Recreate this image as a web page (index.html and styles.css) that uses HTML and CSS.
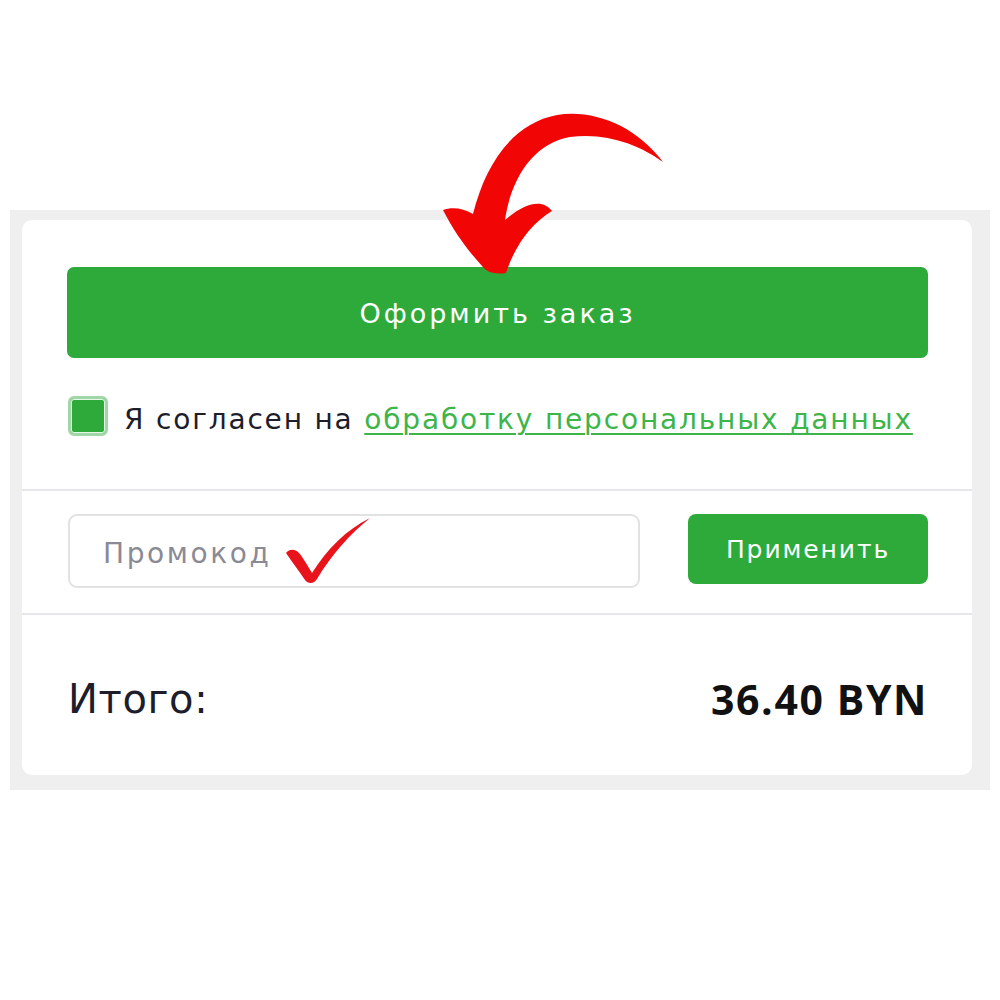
FILE: index.html
```html
<!DOCTYPE html>
<html lang="ru">
<head>
<meta charset="utf-8">
<title>Оформление заказа</title>
<link rel="stylesheet" href="styles.css">
</head>
<body>
<div class="frame">
  <div class="card">
    <section class="order">
      <button class="btn-order" type="button">Оформить заказ</button>
      <label class="agree">
        <span class="check"></span>
        <span class="agree-text">Я согласен на <a href="#" class="link">обработку персональных данных</a></span>
      </label>
    </section>
    <section class="promo">
      <div class="promo-input">Промокод</div>
      <button class="btn-apply" type="button">Применить</button>
    </section>
    <section class="total">
      <span class="total-label">Итого:</span>
      <span class="total-sum">36.40 BYN</span>
    </section>
  </div>
</div>
<svg class="marks" width="1000" height="1000" viewBox="0 0 1000 1000" aria-hidden="true">
  <path fill="#f20505" d="M663 162 C 636 126, 594 109, 557 115 C 514 123, 486 162, 473 214 C 463 208, 452 207, 443 210 C 456 236, 474 258, 486 270 C 492 274, 500 274, 506 273 C 514 248, 530 224, 552 211 C 544 200, 528 200, 505 220 C 511 178, 534 143, 570 137 C 606 132, 640 145, 663 162 Z"/>
  <path fill="#e8131b" d="M286 553 C 290 548, 296 549, 300 554 C 305 561, 309 568, 312 573 C 328 548, 346 530, 370 518 C 350 534, 332 554, 317 579 C 314 584, 308 584, 305 580 C 299 571, 292 562, 286 553 Z"/>
</svg>
</body>
</html>
```
FILE: styles.css
```css
* { box-sizing: border-box; }
html, body { margin: 0; padding: 0; background: #ffffff; }
body { position: relative; width: 1000px; height: 1000px; font-family: "DejaVu Sans", sans-serif; }

.frame {
  margin: 210px 0 0 10px;
  width: 980px;
  height: 580px;
  background: #efefef;
  padding: 10px 18px 15px 12px;
}
.card {
  height: 100%;
  background: #ffffff;
  border-radius: 10px;
  display: flex;
  flex-direction: column;
}

.order {
  padding: 47px 44px 0 45px;
  height: 271px;
  border-bottom: 2px solid #e6e7ec;
}
.btn-order {
  display: block;
  width: 100%;
  height: 91px;
  border: none;
  border-radius: 7px;
  background: #2eaa3b;
  color: #ffffff;
  font-family: "DejaVu Sans", sans-serif;
  font-size: 27px;
  letter-spacing: 3px;
  padding: 2px 0 0;
}
.agree {
  display: flex;
  align-items: center;
  gap: 16px;
  margin-top: 37px;
  padding-left: 1px;
}
.check {
  width: 40px;
  height: 40px;
  border-radius: 6px;
  background: #2eaa3b;
  border: 3px solid #9fd8a6;
  box-shadow: inset 0 0 0 1px #e8f6ea;
  flex: none;
}
.agree-text {
  font-size: 28px;
  letter-spacing: 1.82px;
  color: #1d1d2b;
  white-space: nowrap;
  margin-top: 8px;
}
.link {
  color: #3db549;
  text-decoration: underline;
  text-decoration-thickness: 2px;
  text-underline-offset: 4px;
}

.promo {
  display: grid;
  grid-template-columns: 572px 240px;
  column-gap: 48px;
  align-items: start;
  padding: 23px 44px 0 46px;
  height: 124px;
  border-bottom: 2px solid #e6e7ec;
}
.promo-input {
  height: 74px;
  border: 2px solid #e2e2e2;
  border-radius: 9px;
  display: flex;
  align-items: center;
  padding: 4px 0 0 33px;
  font-size: 28px;
  letter-spacing: 2.6px;
  color: #8a8a95;
}
.btn-apply {
  height: 70px;
  border: none;
  border-radius: 8px;
  background: #2eaa3b;
  color: #ffffff;
  font-family: "DejaVu Sans", sans-serif;
  font-size: 25px;
  letter-spacing: 1.9px;
  padding: 0;
}

.total {
  flex: 1;
  display: flex;
  align-items: center;
  justify-content: space-between;
  padding: 8px 44px 0 46px;
}
.total-label {
  font-size: 40px;
  color: #1d1d2b;
  letter-spacing: 0.6px;
}
.total-sum {
  font-family: "Open Sans", sans-serif;
  font-weight: 700;
  font-size: 41px;
  letter-spacing: 1.6px;
  color: #111111;
}

.marks {
  position: absolute;
  left: 0;
  top: 0;
  pointer-events: none;
}
```
